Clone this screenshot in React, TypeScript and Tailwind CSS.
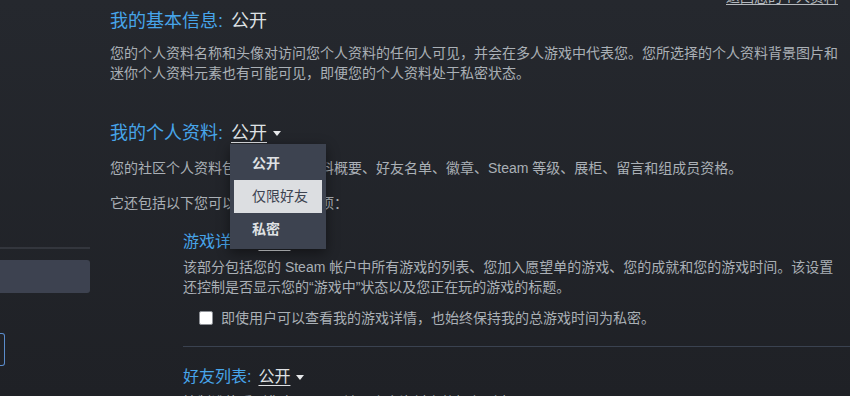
import { ChevronDown } from 'lucide-react'

const font = "font-['Liberation_Sans','Noto_Sans_CJK_SC',sans-serif]"

function Caret() {
  return (
    <svg className="ml-[6px] inline-block" width="8" height="5" viewBox="0 0 8 5">
      <path d="M0 0h8L4 5z" fill="#e6e8ea" />
    </svg>
  )
}

function PrivacyMenu() {
  const items = ['公开', '仅限好友', '私密']

  return (
    <div className="absolute top-full left-[-1px] z-10 w-[96px] bg-[#3d4350] py-[3px] shadow-[0_4px_12px_rgba(0,0,0,0.45)]">
      {items.map((item) => (
        <div
          key={item}
          className={
            item === '仅限好友'
              ? 'mx-[4px] h-[33px] bg-[#dcdee1] pl-[18px] text-[14px] leading-[33px] text-[#3d4350]'
              : 'mx-[4px] h-[33px] pl-[18px] text-[14px] leading-[33px] font-bold text-[#dfe1e4]'
          }
        >
          {item}
        </div>
      ))}
    </div>
  )
}

function Sidebar() {
  return (
    <aside className="flex w-[90px] shrink-0 flex-col">
      <div className="mt-[247px] h-[2px] bg-[#33363d]" />
      <div className="mt-[11px] h-[33px] rounded-r-[3px] bg-[#3d4250]" />
      <div className="mt-[40px] h-[33px] w-[5px] rounded-r-[3px] border-y border-r border-[#5a8ccb]" />
    </aside>
  )
}

export default function App() {
  return (
    <div
      className={`${font} flex h-[396px] w-[850px] overflow-hidden bg-gradient-to-b from-[#25282e] to-[#1f2126]`}
    >
      <Sidebar />

      <main className="ml-[20px] flex flex-1 flex-col">
        <div className="-mt-[11px] flex h-[16px] justify-end pr-[12px]">
          <span className="text-[14px] leading-[16px] text-[#b4b8bd] underline underline-offset-2">
            返回您的个人资料
          </span>
        </div>

        <h2 className="mt-[5px] h-[22px] text-[18px] leading-[22px] font-normal text-[#47a5ea]">
          我的基本信息:<span className="ml-[8px] text-[#dfe1e4]">公开</span>
        </h2>
        <p className="mt-[11px] text-[14px] leading-[20px] text-[#aab0b6]">
          您的个人资料名称和头像对访问您个人资料的任何人可见，并会在多人游戏中代表您。您所选择的个人资料背景图片和
          <br />
          迷你个人资料元素也有可能可见，即便您的个人资料处于私密状态。
        </p>

        <div className="mt-[18px] h-px bg-[#363a41]" />

        <h2 className="mt-[21px] h-[22px] text-[18px] leading-[22px] font-normal text-[#47a5ea]">
          我的个人资料:
          <span className="relative ml-[8px] inline-flex items-center text-[#dfe1e4]">
            <span className="underline underline-offset-[3px]">公开</span>
            <Caret />
            <PrivacyMenu />
          </span>
        </h2>
        <p className="mt-[14px] text-[14px] leading-[20px] text-[#aab0b6]">
          您的社区个人资料包括您的个人资料概要、好友名单、徽章、Steam 等级、展柜、留言和组成员资格。
        </p>
        <p className="mt-[15px] text-[14px] leading-[20px] text-[#aab0b6]">
          它还包括以下您可以单独设置的选项：
        </p>

        <section className="pl-[73px]">
          <h3 className="mt-[19px] h-[20px] text-[16px] leading-[20px] font-normal text-[#47a5ea]">
            游戏详情:
            <span className="ml-[7px] inline-flex items-center text-[#dfe1e4]">
              <span className="underline underline-offset-[3px]">公开</span>
              <Caret />
            </span>
          </h3>
          <p className="mt-[5px] text-[14px] leading-[20px] text-[#aab0b6]">
            该部分包括您的 Steam 帐户中所有游戏的列表、您加入愿望单的游戏、您的成就和您的游戏时间。该设置
            <br />
            还控制是否显示您的“游戏中”状态以及您正在玩的游戏的标题。
          </p>
          <label className="mt-[11px] flex h-[20px] items-center gap-[8px] pl-[16px]">
            <span className="h-[14px] w-[14px] rounded-[2px] border border-[#8d9096] bg-white" />
            <span className="text-[14px] leading-[20px] text-[#aab0b6]">
              即使用户可以查看我的游戏详情，也始终保持我的总游戏时间为私密。
            </span>
          </label>

          <div className="mt-[18px] h-px bg-[#3a4250]" />

          <h3 className="mt-[20px] h-[20px] text-[16px] leading-[20px] font-normal text-[#47a5ea]">
            好友列表:
            <span className="ml-[7px] inline-flex items-center text-[#dfe1e4]">
              <span className="underline underline-offset-[3px]">公开</span>
              <Caret />
            </span>
          </h3>
          <p className="mt-[5px] text-[14px] leading-[20px] text-[#aab0b6]">
            控制谁能看到您在 Steam 社区个人资料上的好友列表。
          </p>
        </section>
      </main>
      <ChevronDown className="hidden" />
    </div>
  )
}
